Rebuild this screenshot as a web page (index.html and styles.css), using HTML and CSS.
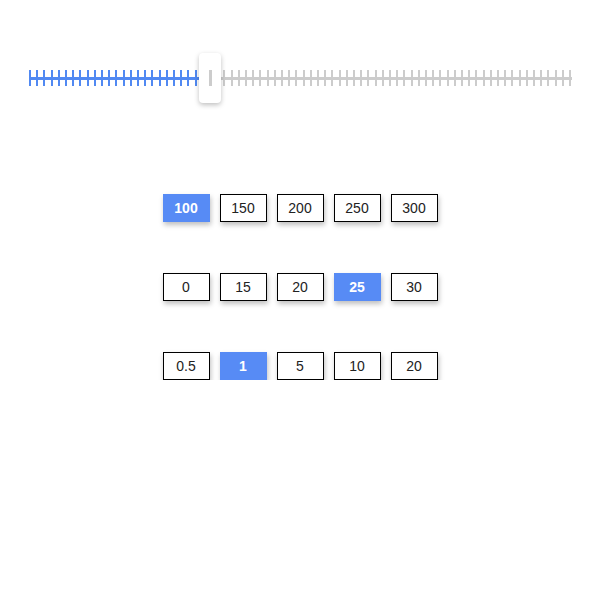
FILE: index.html
```html
<!DOCTYPE html>
<html lang="en">
  <head>
    <meta charset="UTF-8" />
    <meta name="viewport" content="width=device-width, initial-scale=1.0" />
    <title>Slider</title>
    <link rel="stylesheet" href="styles.css">
  </head>
  <body>
    <div class="slider">
      <div class="track">
        <div class="fill"></div>
        <div class="thumb"><span class="grip"></span></div>
      </div>
    </div>

    <div class="options">
      <div class="row">
        <button class="opt active">100</button>
        <button class="opt">150</button>
        <button class="opt">200</button>
        <button class="opt">250</button>
        <button class="opt">300</button>
      </div>
      <div class="row">
        <button class="opt">0</button>
        <button class="opt">15</button>
        <button class="opt">20</button>
        <button class="opt active">25</button>
        <button class="opt">30</button>
      </div>
      <div class="row">
        <button class="opt">0.5</button>
        <button class="opt active">1</button>
        <button class="opt">5</button>
        <button class="opt">10</button>
        <button class="opt">20</button>
      </div>
    </div>
  </body>
</html>
```

FILE: styles.css
```css
body {
  margin: 0;
  font-family: "Liberation Sans", Arial, sans-serif;
  background-color: #fff;
}
.slider {
  padding: 70px 28px 0 29px;
}
.track {
  position: relative;
  height: 16px;
  background:
    linear-gradient(#ccc, #ccc) 0 7px / 100% 3px no-repeat,
    repeating-linear-gradient(90deg, #ccc 0 2px, transparent 2px 7.2px);
}
.fill {
  width: 170px;
  height: 16px;
  background:
    linear-gradient(#5189f2, #5189f2) 0 7px / 100% 3px no-repeat,
    repeating-linear-gradient(90deg, #5189f2 0 2px, transparent 2px 7.2px);
}
.thumb {
  position: absolute;
  left: 170px;
  top: -17px;
  width: 22px;
  height: 50px;
  background-color: #fff;
  border-radius: 4px;
  box-shadow: 0 2px 5px rgba(0, 0, 0, 0.25);
  display: flex;
  align-items: center;
  justify-content: center;
}
.grip {
  width: 3px;
  height: 16px;
  background-color: #ccc;
}
.options {
  margin-top: 108px;
  display: flex;
  flex-direction: column;
  gap: 51px;
}
.row {
  display: flex;
  justify-content: center;
  gap: 10px;
}
.opt {
  box-sizing: border-box;
  width: 47px;
  height: 28px;
  padding: 0;
  border: 1px solid #000;
  background-color: #fff;
  color: #222;
  font-family: inherit;
  font-size: 14px;
  box-shadow: 1px 3px 5px rgba(0, 0, 0, 0.25);
  cursor: pointer;
}
.opt.active {
  border-color: #578bf5;
  background-color: #578bf5;
  color: #fff;
  font-weight: bold;
}
```
